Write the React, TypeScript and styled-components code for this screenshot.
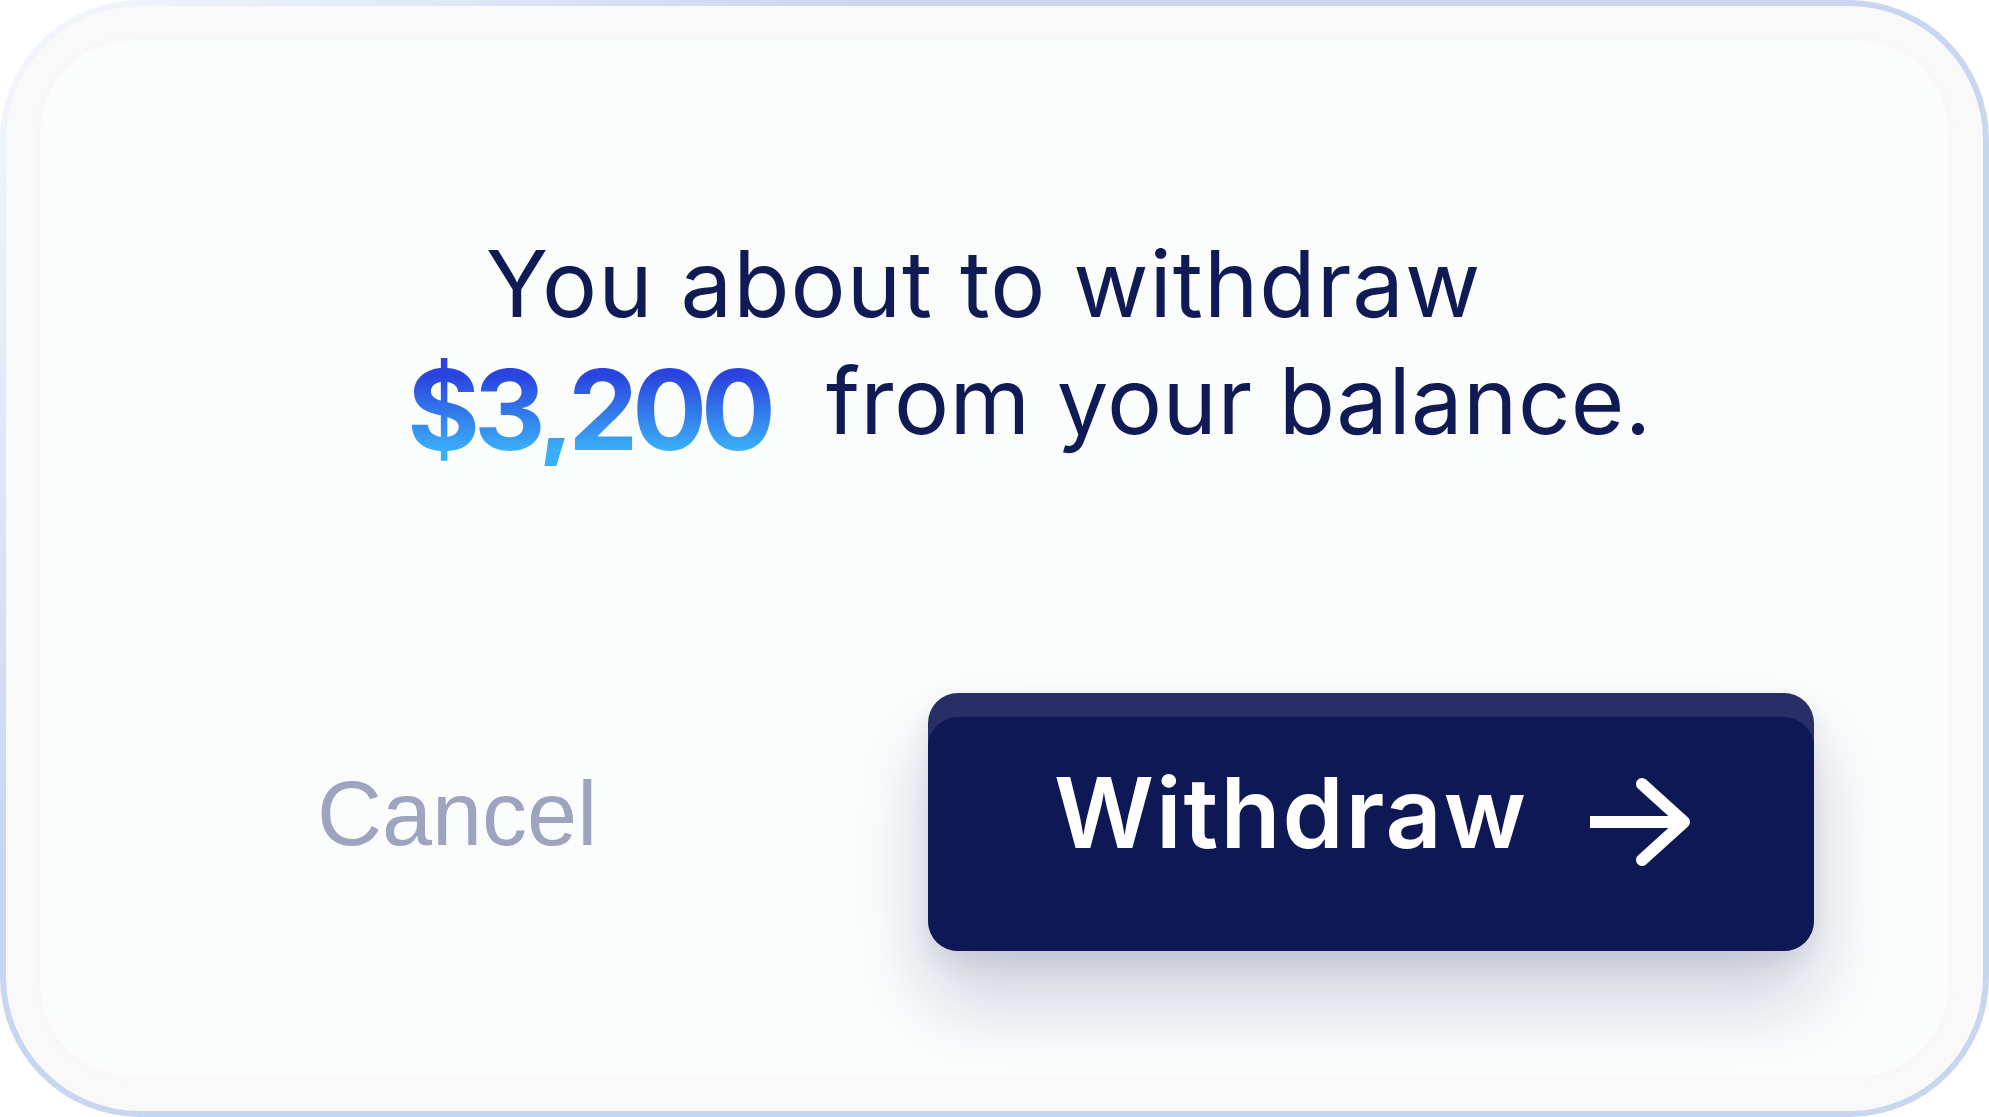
import React from "react";
import styled, { createGlobalStyle } from "styled-components";

const GlobalStyle = createGlobalStyle`
  html, body {
    margin: 0;
    padding: 0;
    background: #ffffff;
  }
  #root {
    width: 100vw;
    height: 100vh;
  }
  * {
    box-sizing: border-box;
  }
`;

const Frame = styled.div`
  width: 100%;
  height: 100%;
  padding: 36px;
  border: 6px solid transparent;
  border-radius: 140px;
  background:
    linear-gradient(#f9f9fa, #f9f9fa) padding-box,
    linear-gradient(135deg, #f6f9fc 0%, #e4ebf8 12%, #c8d6f0 28%, #c8d6f0 100%) border-box;
`;

const Panel = styled.div`
  width: 100%;
  height: 100%;
  border-radius: 90px;
  background: #fbfdfd;
  box-shadow: 0 0 0 2px #fafbfb, 0 0 6px rgba(240, 242, 244, 0.9);
  display: flex;
  flex-direction: column;
`;

const Message = styled.div`
  margin-top: 183px;
  font-family: Inter, "Noto Sans", sans-serif;
  font-weight: 400;
  font-size: 92px;
  line-height: 117px;
  color: #101a54;
  text-align: center;
  letter-spacing: 1px;
`;

const Line = styled.div<{ $shift: number }>`
  white-space: nowrap;
  padding-left: ${(p) => (p.$shift > 0 ? p.$shift * 2 : 0)}px;
  padding-right: ${(p) => (p.$shift < 0 ? -p.$shift * 2 : 0)}px;
`;

/* gradient figure; the right padding keeps the last glyph inside the clipped background */
const Amount = styled.span`
  display: inline-block;
  margin-right: 50px;
  padding-right: 6px;
  font-weight: 700;
  font-size: 111px;
  line-height: 113px;
  letter-spacing: -6px;
  vertical-align: -16px;
  background: linear-gradient(180deg, #2a44df 20%, #3aaef6 85%);
  -webkit-background-clip: text;
  background-clip: text;
  color: transparent;
`;

const Rest = styled.span`
  letter-spacing: 0.4px;
`;

const Actions = styled.div`
  margin-top: 227px;
  padding: 0 133px 0 275px;
  display: flex;
  align-items: flex-start;
`;

const CancelButton = styled.button`
  margin-top: 76px;
  padding: 0;
  border: none;
  background: none;
  font-family: "Liberation Sans", Arial, sans-serif;
  font-size: 90px;
  line-height: 90px;
  color: #9ea3bf;
  cursor: pointer;
`;

const WithdrawButton = styled.button`
  position: relative;
  margin-left: auto;
  width: 886px;
  height: 258px;
  padding: 0 123px 0 126px;
  border: none;
  border-radius: 30px;
  overflow: hidden;
  background: #282f67;
  box-shadow: 0 48px 80px rgba(16, 24, 84, 0.2), 0 10px 24px rgba(16, 24, 84, 0.08);
  display: flex;
  align-items: center;
  justify-content: space-between;
  cursor: pointer;

  &::before {
    content: "";
    position: absolute;
    top: 24px;
    left: 0;
    right: 0;
    bottom: 0;
    border-radius: 30px;
    background: #0e1854;
  }
`;

const ButtonLabel = styled.span`
  position: relative;
  margin-bottom: 18px;
  font-family: Inter, "Noto Sans", sans-serif;
  font-weight: 600;
  font-size: 98px;
  line-height: 1;
  color: #ffffff;
  letter-spacing: 2px;
`;

const ArrowIcon = styled.svg`
  position: relative;
  flex: none;
  width: 104px;
  height: 90px;
`;

export default function App() {
  return (
    <>
      <GlobalStyle />
      <Frame>
        <Panel>
          <Message>
            <Line $shift={-11}>You about to withdraw</Line>
            <Line $shift={35}>
              <Amount>$3,200</Amount>
              <Rest>from your balance.</Rest>
            </Line>
          </Message>
          <Actions>
            <CancelButton type="button">Cancel</CancelButton>
            <WithdrawButton type="button">
              <ButtonLabel>Withdraw</ButtonLabel>
              <ArrowIcon viewBox="0 0 104 90" fill="none" stroke="#ffffff" strokeWidth={12}>
                <line x1="3" y1="45" x2="92" y2="45" strokeLinecap="butt" />
                <polyline
                  points="55,7 97,45 55,83"
                  strokeLinecap="round"
                  strokeLinejoin="round"
                />
              </ArrowIcon>
            </WithdrawButton>
          </Actions>
        </Panel>
      </Frame>
    </>
  );
}
